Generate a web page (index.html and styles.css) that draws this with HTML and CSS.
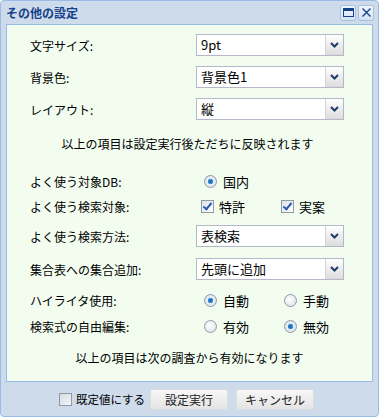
FILE: index.html
```html
<!DOCTYPE html>
<html lang="ja">
<head>
  <meta charset="UTF-8" />
  <title>その他の設定</title>
  <link rel="stylesheet" href="styles.css">
</head>
<body>
  <div class="win">
    <div class="win-head">
      <span class="win-title">その他の設定</span>
      <span class="tool">
        <svg width="11" height="9" viewBox="0 0 11 9"><rect x="0.5" y="0.5" width="10" height="8" fill="none" stroke="#15428b"/><rect x="1" y="1" width="9" height="2" fill="#15428b"/></svg>
      </span>
      <span class="tool">
        <svg width="11" height="11" viewBox="0 0 11 11"><path d="M1.5 1.5 L9.5 9.5 M9.5 1.5 L1.5 9.5" stroke="#15428b" stroke-width="1.4" fill="none"/></svg>
      </span>
    </div>

    <div class="panel">
      <div class="row sel first">
        <span class="lbl">文字サイズ:</span>
        <div class="combo"><span class="combo-val">9pt</span><span class="trigger"><svg width="9" height="6" viewBox="0 0 9 6"><path d="M1 1 L4.5 4.5 L8 1" stroke="#1d3c6d" stroke-width="2" fill="none"/></svg></span></div>
      </div>
      <div class="row sel">
        <span class="lbl">背景色:</span>
        <div class="combo"><span class="combo-val">背景色1</span><span class="trigger"><svg width="9" height="6" viewBox="0 0 9 6"><path d="M1 1 L4.5 4.5 L8 1" stroke="#1d3c6d" stroke-width="2" fill="none"/></svg></span></div>
      </div>
      <div class="row sel">
        <span class="lbl">レイアウト:</span>
        <div class="combo"><span class="combo-val">縦</span><span class="trigger"><svg width="9" height="6" viewBox="0 0 9 6"><path d="M1 1 L4.5 4.5 L8 1" stroke="#1d3c6d" stroke-width="2" fill="none"/></svg></span></div>
      </div>

      <p class="note note-top">以上の項目は設定実行後ただちに反映されます</p>

      <div class="row opt db">
        <span class="lbl">よく使う対象DB:</span>
        <label class="choice"><span class="radio on"></span>国内</label>
      </div>
      <div class="row opt tight">
        <span class="lbl">よく使う検索対象:</span>
        <label class="choice"><span class="check on"></span>特許</label>
        <label class="choice"><span class="check on"></span>実案</label>
      </div>
      <div class="row sel search">
        <span class="lbl">よく使う検索方法:</span>
        <div class="combo"><span class="combo-val">表検索</span><span class="trigger"><svg width="9" height="6" viewBox="0 0 9 6"><path d="M1 1 L4.5 4.5 L8 1" stroke="#1d3c6d" stroke-width="2" fill="none"/></svg></span></div>
      </div>
      <div class="row sel add">
        <span class="lbl">集合表への集合追加:</span>
        <div class="combo"><span class="combo-val">先頭に追加</span><span class="trigger"><svg width="9" height="6" viewBox="0 0 9 6"><path d="M1 1 L4.5 4.5 L8 1" stroke="#1d3c6d" stroke-width="2" fill="none"/></svg></span></div>
      </div>
      <div class="row opt hl">
        <span class="lbl">ハイライタ使用:</span>
        <label class="choice"><span class="radio on"></span>自動</label>
        <label class="choice"><span class="radio"></span>手動</label>
      </div>
      <div class="row opt edit">
        <span class="lbl">検索式の自由編集:</span>
        <label class="choice"><span class="radio"></span>有効</label>
        <label class="choice"><span class="radio on"></span>無効</label>
      </div>

      <p class="note note-bottom">以上の項目は次の調査から有効になります</p>
    </div>

    <div class="win-foot">
      <label class="default"><span class="check"></span>既定値にする</label>
      <button class="btn">設定実行</button>
      <button class="btn">キャンセル</button>
    </div>
  </div>
</body>
</html>
```

FILE: styles.css
```css
body { margin: 0; font-family: "Noto Sans CJK JP", "Noto Sans", sans-serif; font-size: 12px; color: #000; background: #fff; }
.win { width: 377px; height: 415px; background: #cedbea; border: 1px solid #99bbe8; border-radius: 4px; display: flex; flex-direction: column; }
.win-head { height: 23px; display: flex; align-items: center; padding: 0 4px 0 5px; }
.win-title { flex: 1; font-weight: bold; color: #15428b; font-size: 12px; }
.tool { width: 14px; height: 14px; margin-left: 2px; display: flex; align-items: center; justify-content: center; background: linear-gradient(#f1f6fc, #d5e2f2); border: 1px solid #a8c0e0; border-radius: 2px; }

.panel { margin: 0 5px; background: #f2fdf0; border: 1px solid #99bbe8; padding-top: 9px; box-sizing: border-box; height: 358px; }
.row { display: flex; align-items: center; padding-left: 23px; }
.lbl { width: 166px; flex: none; }
.row.sel { height: 22px; margin-top: 10px; }
.row.sel.first { margin-top: 0; }
.row.opt { height: 20px; }
.row.db { margin-top: 19px; }
.row.tight { margin-top: 5px; }
.row.search { margin-top: 9px; }
.row.add { margin-top: 11px; }
.row.hl { margin-top: 10px; }
.row.edit { margin-top: 6px; }

.combo { width: 148px; height: 22px; box-sizing: border-box; border: 1px solid #b5b8c8; background: #fff; display: flex; }
.combo-val { flex: 1; padding-left: 4px; line-height: 20px; font-size: 13px; }
.trigger { width: 17px; display: flex; align-items: center; justify-content: center; background: linear-gradient(#ffffff, #dcdcdc); border-left: 1px solid #d4d4d4; }

.choice { display: flex; align-items: center; width: 80px; font-size: 13px; }
.radio { width: 11px; height: 11px; border-radius: 50%; border: 1px solid #8e9aa8; background: radial-gradient(circle at 40% 40%, #ffffff, #d8dde3); margin: 0 6px 0 8px; box-sizing: content-box; position: relative; }
.radio.on { background: radial-gradient(circle at 50% 50%, #1c5fa5 0, #3a8fd6 2.5px, #e8eef5 3px, #d8dde3 100%); }
.check { width: 11px; height: 11px; border: 1px solid #8e9aa8; background: linear-gradient(135deg, #dde3ea, #ffffff); margin: 0 5px 0 5px; display: inline-block; position: relative; }
.check.on::after { content: ""; position: absolute; left: 3px; top: 0; width: 3px; height: 7px; border: solid #2b5aa8; border-width: 0 2px 2px 0; transform: rotate(40deg); }

.note { margin: 0; text-align: center; line-height: 16px; }
.note-top { margin-top: 16px; padding-right: 4px; }
.note-bottom { margin-top: 14px; }

.win-foot { flex: 1; display: flex; align-items: center; padding-left: 58px; }
.default { display: flex; align-items: center; font-size: 11.5px; margin-right: 5px; }
.default .check { margin: 0 4px 0 0; background: linear-gradient(135deg, #d6dbe1, #f4f5f6); }
.btn { width: 78px; height: 21px; margin-right: 8px; font-family: inherit; font-size: 12px; color: #222; border: 1px solid #d8dde4; background: linear-gradient(#f7f7f7, #e4e4e4); border-radius: 2px; padding: 0; }
```
